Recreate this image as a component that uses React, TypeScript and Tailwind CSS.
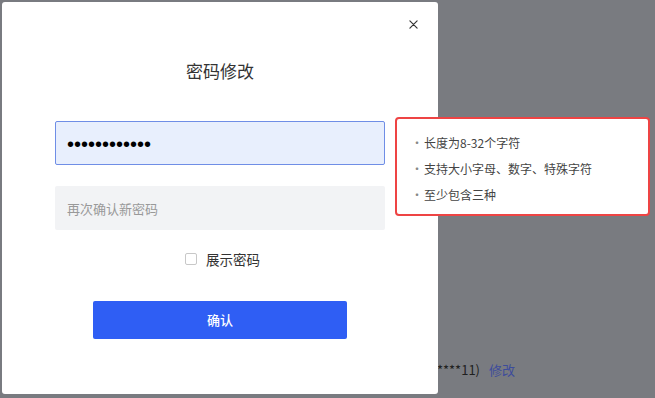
import { useState } from "react";

const font = { fontFamily: '"Noto Sans CJK SC", "Noto Sans", sans-serif' };

const rules = ["长度为8-32个字符", "支持大小字母、数字、特殊字符", "至少包含三种"];

const CloseIcon = () => (
  <svg width="9" height="9" viewBox="0 0 10 10" fill="none" stroke="#333" strokeWidth="1.3" strokeLinecap="round">
    <path d="M1 1 L9 9 M9 1 L1 9" />
  </svg>
);

const App = () => {
  const [show, setShow] = useState(false);

  return (
    <div className="relative w-[655px] h-[398px] overflow-hidden bg-[#797b80]" style={font}>
      {/* page behind the mask */}
      <div className="flex flex-col pt-[360px]">
        <div className="flex items-center text-[13px] leading-[20px]">
          <span className="w-[480px] text-right text-[#1f1f1f]">绑定手机 (138****11)</span>
          <span className="ml-[9px] text-[#3d4c9c]">修改</span>
        </div>
      </div>

      {/* modal */}
      <div className="absolute left-[2px] top-[2px] w-[436px] h-[392px] bg-white rounded-[3px] flex flex-col items-center">
        <button className="absolute right-[19px] top-[16px] w-[12px] h-[12px] flex items-center justify-center">
          <CloseIcon />
        </button>

        <h2 className="mt-[56px] text-[17px] leading-[26px] text-[#333]">密码修改</h2>

        <div className="mt-[37px] w-[330px] flex flex-col gap-[21px]">
          <input
            type={show ? "text" : "password"}
            readOnly
            value="abc123456789"
            className="h-[44px] w-full px-[11px] pt-[3px] bg-[#e8effd] border border-[#6f8ee6] rounded-[2px] text-[20px] text-black outline-none"
            style={{ fontFamily: '"Liberation Sans", Arial, sans-serif' }}
          />
          <input
            type="password"
            readOnly
            placeholder="再次确认新密码"
            className="h-[44px] w-full px-[12px] bg-[#f2f3f5] rounded-[2px] text-[13px] text-black placeholder:text-[#999] outline-none"
            style={font}
          />
        </div>

        <label className="mt-[19px] ml-[5px] flex items-center gap-[9px] cursor-pointer" onClick={() => setShow(!show)}>
          <span className="w-[12px] h-[12px] border border-[#c8c8c8] rounded-[2px] bg-white" />
          <span className="text-[13.5px] leading-[20px] text-[#333]">展示密码</span>
        </label>

        <button className="mt-[32px] w-[254px] h-[38px] bg-[#2f5ef4] rounded-[2px] text-white text-[13px] font-medium">
          确认
        </button>
      </div>

      {/* password rule tip */}
      <div className="absolute left-[395px] top-[117px] w-[255px] h-[99px] bg-white border-2 border-[#ee4444] rounded-[4px] pt-[11px] pl-[14px]">
        {rules.map((r) => (
          <div key={r} className="flex items-center text-[12px] leading-[26px] text-[#444]">
            <span className="w-[13px] text-[#888]">·</span>
            <span>{r}</span>
          </div>
        ))}
      </div>
    </div>
  );
};

export default App;
